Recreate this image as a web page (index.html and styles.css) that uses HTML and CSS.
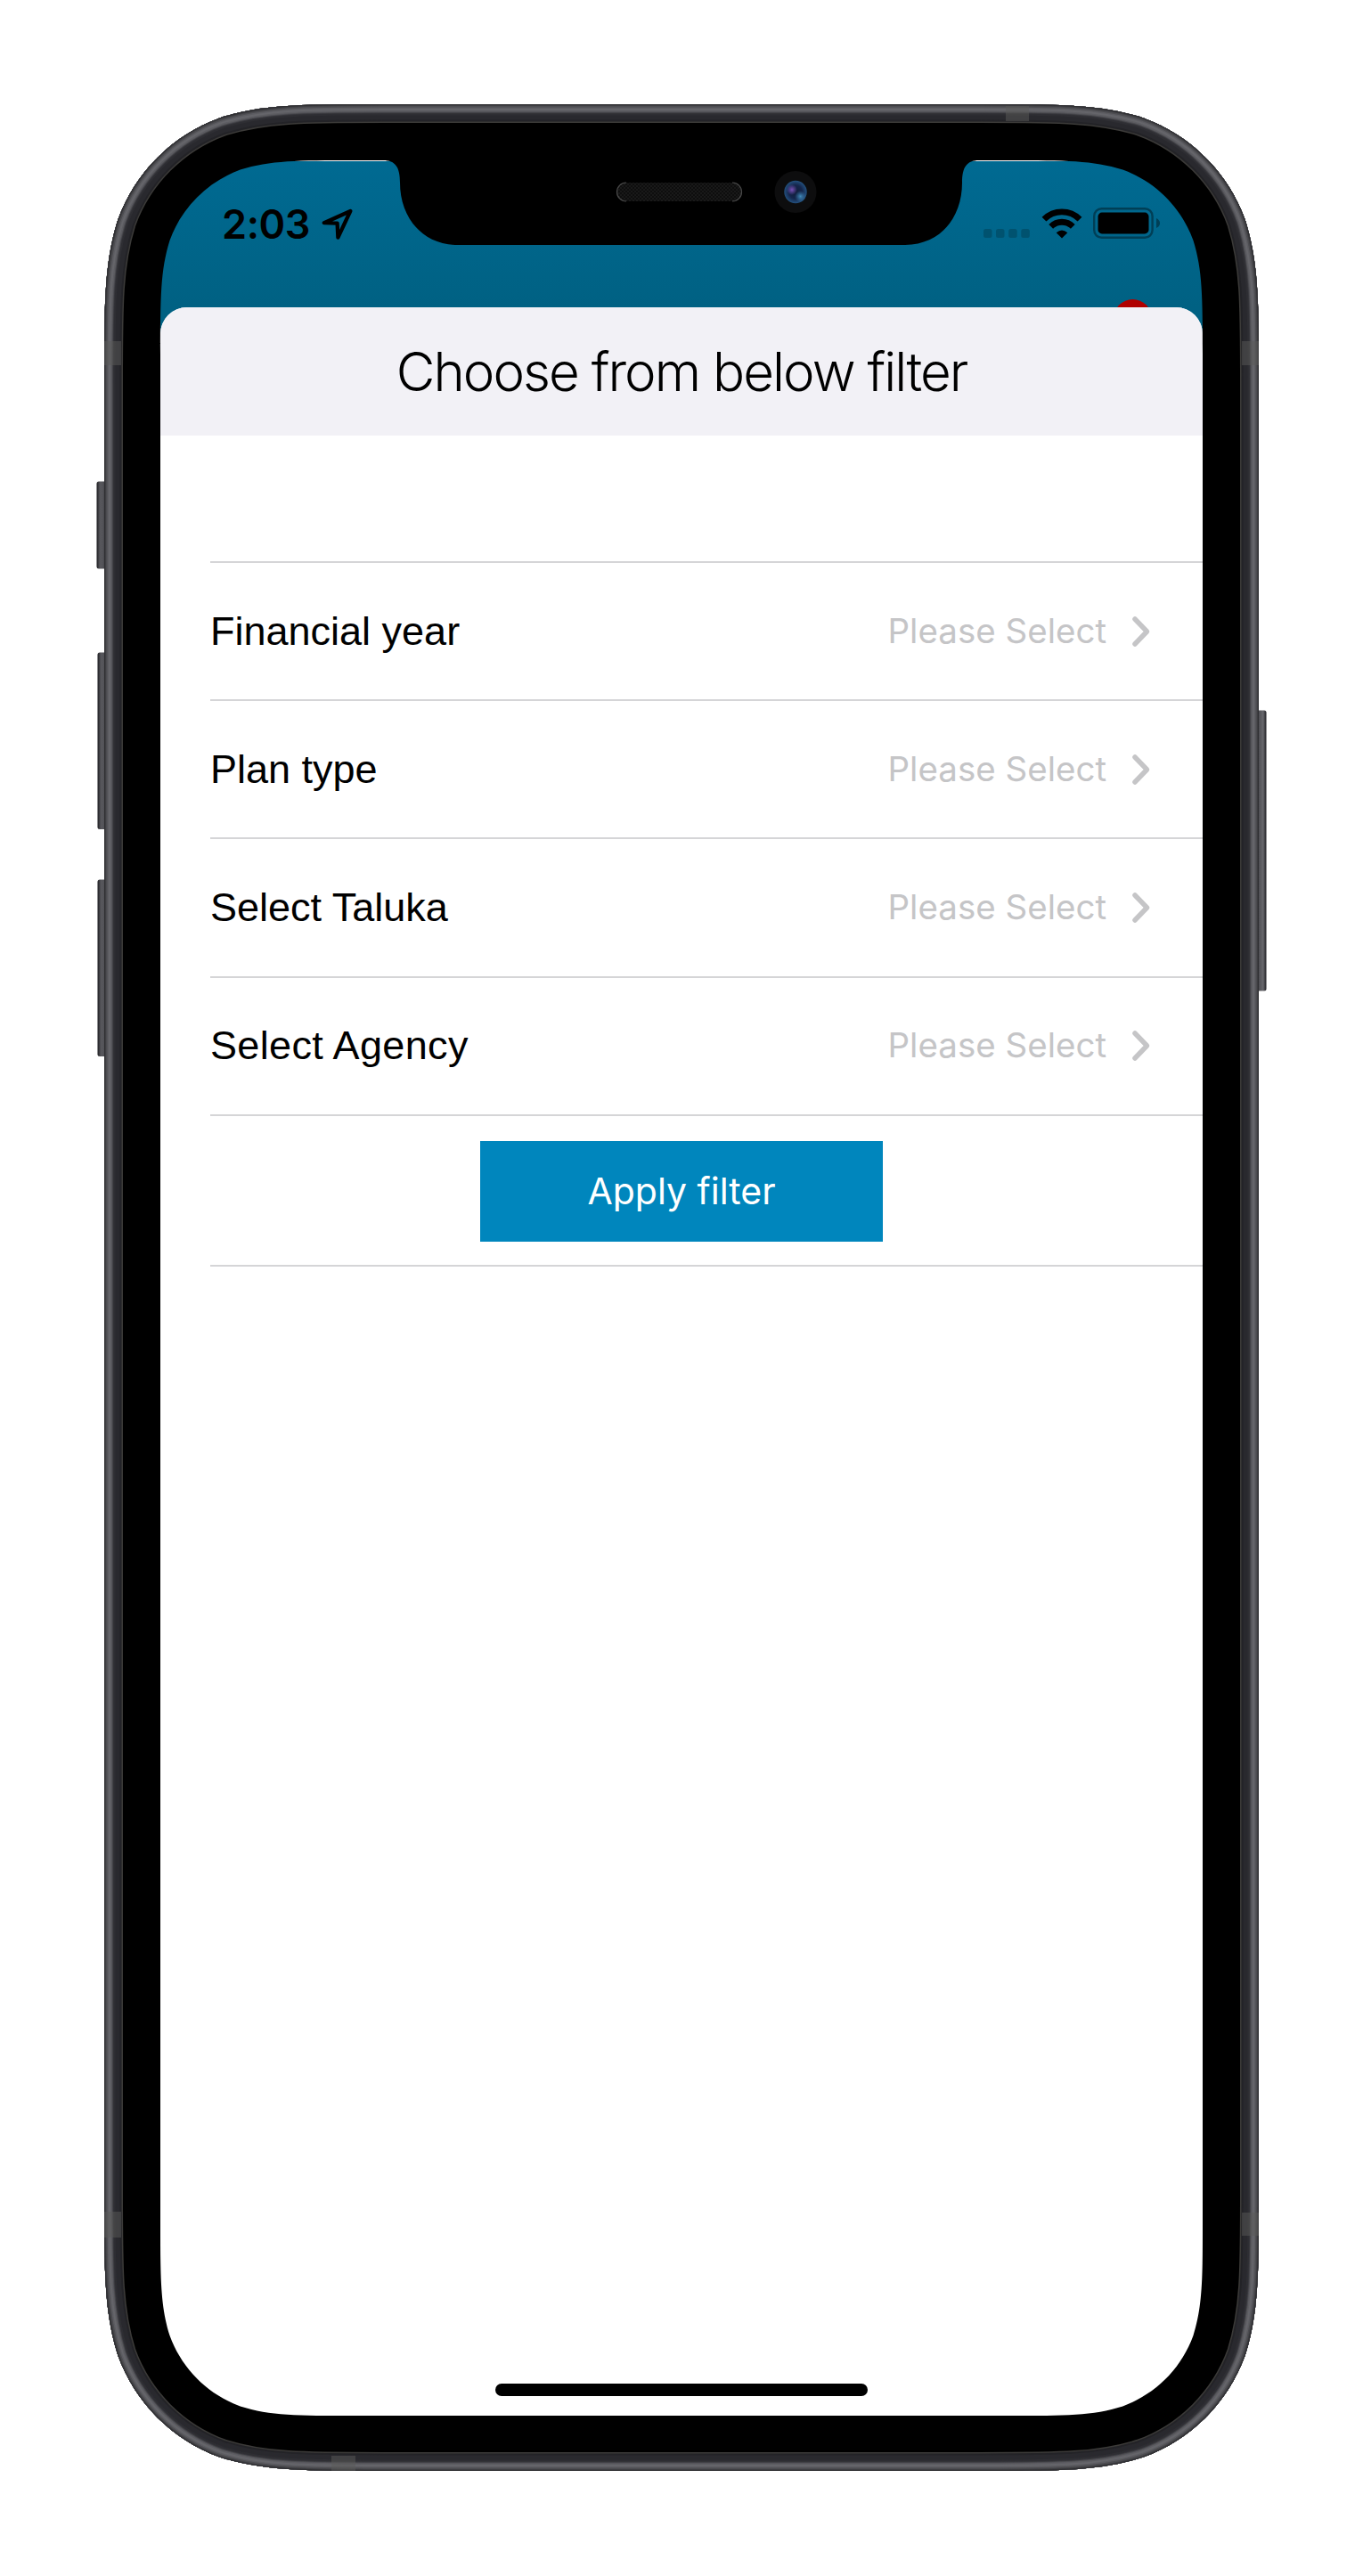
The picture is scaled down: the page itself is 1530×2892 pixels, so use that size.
FILE: index.html
```html
<!DOCTYPE html>
<html lang="en">
<head>
<meta charset="utf-8">
<title>Choose from below filter</title>
<link rel="stylesheet" href="styles.css">
</head>
<body>
<main class="phone">
  <div class="screen">
    <header class="status-bar">
      <div class="status-left">
        <span class="clock">2:03</span>
        <svg class="location" width="36" height="36" viewBox="0 0 36 36"><path d="M32.3 3 2.8 16.2 17.6 16.6 18.4 32.6Z"/></svg>
      </div>
      <div class="status-right">
        <svg class="signal" width="54" height="34" viewBox="0 0 54 34"><rect x="1" y="23" width="9.5" height="10" rx="2.5"/><rect x="15" y="23" width="9.5" height="10" rx="2.5"/><rect x="29.2" y="23" width="9.5" height="10" rx="2.5"/><rect x="43.3" y="23" width="9.5" height="10" rx="2.5"/></svg>
        <svg class="wifi" width="46" height="34" viewBox="0 0 46 34">
          <path class="arc" d="M3 12.2A28.3 28.3 0 0 1 43 12.2"/>
          <path class="arc" d="M10.7 20.3A17.5 17.5 0 0 1 35.3 20.3"/>
          <path d="M23 33.5 16.7 27.2Q23 21.8 29.3 27.2Z"/>
        </svg>
        <svg class="battery" width="76" height="36" viewBox="0 0 76 36">
          <rect class="shell" x="1.2" y="1.2" width="65.4" height="32.6" rx="8.5"/>
          <rect x="5.5" y="5.6" width="57" height="23.8" rx="4.5"/>
          <path class="nub" d="M71 12Q75 14 75 17.5T71 23Z"/>
        </svg>
      </div>
      <span class="badge"></span>
    </header>
    <section class="sheet">
      <h1 class="title">Choose from below filter</h1>
      <ul class="filters">
        <li class="row"><span class="label">Financial year</span><span class="value">Please Select</span><svg class="chevron" width="22" height="36" viewBox="0 0 22 36"><path d="M4 4 17.5 18 4 32"/></svg></li>
        <li class="row"><span class="label">Plan type</span><span class="value">Please Select</span><svg class="chevron" width="22" height="36" viewBox="0 0 22 36"><path d="M4 4 17.5 18 4 32"/></svg></li>
        <li class="row"><span class="label">Select Taluka</span><span class="value">Please Select</span><svg class="chevron" width="22" height="36" viewBox="0 0 22 36"><path d="M4 4 17.5 18 4 32"/></svg></li>
        <li class="row"><span class="label label-agency">Select Agency</span><span class="value">Please Select</span><svg class="chevron" width="22" height="36" viewBox="0 0 22 36"><path d="M4 4 17.5 18 4 32"/></svg></li>
        <li class="action"><button class="apply" type="button">Apply filter</button></li>
      </ul>
      <div class="home-indicator"></div>
    </section>
  </div>
  <svg class="frame" width="1314" height="2657" viewBox="108 117 1314 2657">
    <defs>
      <path id="body" d="M430.4 117H1099.6C1189.9 117 1235 117 1283.5 132.4C1336.6 151.7 1378.3 193.4 1397.6 246.5C1413 295 1413 340.1 1413 430.4V2460.6C1413 2550.9 1413 2596 1397.6 2644.5C1378.3 2697.6 1336.6 2739.3 1283.5 2758.6C1235 2774 1189.9 2774 1099.6 2774H430.4C340.1 2774 295 2774 246.5 2758.6C193.4 2739.3 151.7 2697.6 132.4 2644.5C117 2596 117 2550.9 117 2460.6V430.4C117 340.1 117 295 132.4 246.5C151.7 193.4 193.4 151.7 246.5 132.4C295 117 340.1 117 430.4 117Z"/>
      <path id="opening" d="M397 180H430C444 180 449 188 449 205C449 244 474 275 514 275H1015C1056 275 1080 244 1080 205C1080 188 1085 180 1099 180H1133C1195.4 180 1226.7 180 1260.3 190.6C1297.1 204 1326 232.9 1339.4 269.7C1350 303.3 1350 334.6 1350 397V2495C1350 2557.4 1350 2588.7 1339.4 2622.3C1326 2659.1 1297.1 2688 1260.3 2701.4C1226.7 2712 1195.4 2712 1133 2712H397C334.6 2712 303.3 2712 269.7 2701.4C232.9 2688 204 2659.1 190.6 2622.3C180 2588.7 180 2557.4 180 2495V397C180 334.6 180 303.3 190.6 269.7C204 232.9 232.9 204 269.7 190.6C303.3 180 334.6 180 397 180Z"/>
      <clipPath id="bodyClip"><use href="#body"/></clipPath>
      <mask id="cut" maskUnits="userSpaceOnUse" x="108" y="117" width="1314" height="2657"><rect x="108" y="117" width="1314" height="2657" fill="#fff"/><use href="#opening" fill="#000"/></mask>
      <linearGradient id="key"><stop offset="0" stop-color="#1c1c20"/><stop offset=".3" stop-color="#56565b"/><stop offset=".55" stop-color="#55555a"/><stop offset="1" stop-color="#323237"/></linearGradient>
      <linearGradient id="keyRight" x1="1" x2="0"><stop offset="0" stop-color="#1c1c20"/><stop offset=".3" stop-color="#68686d"/><stop offset=".6" stop-color="#55555a"/><stop offset="1" stop-color="#3a3a3f"/></linearGradient>
      <pattern id="mesh" width="4" height="4" patternUnits="userSpaceOnUse"><rect width="4" height="4" fill="#191919"/><path d="M0 0h2v2H0zM2 2h2v2H2z" fill="#0e0e0e"/></pattern>
      <radialGradient id="lens"><stop offset="0" stop-color="#101c38"/><stop offset=".6" stop-color="#15264c"/><stop offset="1" stop-color="#23507e"/></radialGradient>
      <radialGradient id="violet"><stop offset="0" stop-color="#7650b4"/><stop offset="1" stop-color="#7650b4" stop-opacity="0"/></radialGradient>
      <radialGradient id="cyan"><stop offset="0" stop-color="#4189b5"/><stop offset="1" stop-color="#3575a8" stop-opacity="0"/></radialGradient>
    </defs>
    <g class="keys">
      <rect x="108.5" y="529.5" width="12" height="109" rx="2.5" fill="none"/>
      <rect x="108.5" y="540.5" width="12" height="98" rx="2.5" fill="url(#key)"/>
      <rect x="109.5" y="732.5" width="12" height="198.5" rx="2.5" fill="url(#key)"/>
      <rect x="109.5" y="987.5" width="12" height="198.5" rx="2.5" fill="url(#key)"/>
      <rect x="1409.5" y="797.5" width="12" height="315" rx="2.5" fill="url(#keyRight)"/>
    </g>
    <g mask="url(#cut)">
      <use href="#body" fill="#000"/>
      <g clip-path="url(#bodyClip)" fill="none">
        <use href="#body" stroke="#3b3a38" stroke-width="42"/>
        <use href="#body" stroke="#232327" stroke-width="39"/>
        <use href="#body" stroke="#29292e" stroke-width="35"/>
        <use href="#body" stroke="#2e2e33" stroke-width="25"/>
        <use href="#body" stroke="#38383d" stroke-width="21"/>
        <use href="#body" stroke="#4d4d52" stroke-width="19"/>
        <use href="#body" stroke="#5c5c61" stroke-width="17"/>
        <use href="#body" stroke="#65656a" stroke-width="14"/>
        <use href="#body" stroke="#5c5c61" stroke-width="10"/>
        <use href="#body" stroke="#4c4c50" stroke-width="7"/>
        <use href="#body" stroke="#3e3e42" stroke-width="4"/>
        <use href="#body" stroke="#2f2f32" stroke-width="2"/>
      </g>
      <path class="bands" d="M117 383h19v27h-19zM1394 383h19v27h-19zM117 2483h19v29h-19zM1394 2484h19v26h-19zM1129 119h26v17h-26zM372 2757h27v17h-27z"/>
      <rect x="692" y="205" width="141" height="21" rx="10.5" fill="url(#mesh)"/>
      <path d="M703 205A10.5 10.5 0 0 0 703 226M822 205A10.5 10.5 0 0 1 822 226" fill="none" stroke="#4a4a4a" stroke-width="1.2"/>
      <circle cx="893" cy="215.5" r="23.5" fill="#0d0d0e"/>
      <circle cx="893" cy="215.5" r="12.7" fill="url(#lens)"/>
      <circle cx="889" cy="213" r="6" fill="url(#violet)"/>
      <circle cx="898.5" cy="220.5" r="6.5" fill="url(#cyan)"/>
    </g>
  </svg>
</main>
</body>
</html>
```
FILE: styles.css
```css
* { box-sizing: border-box; }

body {
  margin: 0;
  background: #fff;
  font-family: Inter, "Liberation Sans", sans-serif;
  color: #000;
}

svg { display: block; flex: none; }

.phone {
  position: relative;
  width: 1296px;
  height: 2657px;
  margin: 117px;
  padding: 63px 63px 62px;
}

/* The bezel lies over the screen and masks its corners and notch. */
.frame {
  position: absolute;
  top: 0;
  left: -9px;
  pointer-events: none;
}

.bands { fill: #5a5a58; fill-opacity: .5; }

.screen {
  display: flex;
  flex-direction: column;
  height: 2532px;
  overflow: hidden;
  background: linear-gradient(#fff 1px, #006a92 1px, #006183 165px, #006183 200px, #fff 200px);
}

.status-bar {
  position: relative;
  display: flex;
  justify-content: space-between;
  flex: none;
  height: 165px;
  padding: 53px 47px 0 69px;
}

.status-left, .status-right { display: flex; }

.clock {
  width: 112px;
  font-size: 45px;
  font-weight: 570;
  line-height: 37px;
  letter-spacing: -.4px;
}

.location { margin-top: 1px; }

.location path {
  fill: none;
  stroke: #000;
  stroke-width: 4.3;
  stroke-linejoin: round;
}

.signal { fill: #00526f; margin: 1px 12px 0 0; }
.wifi { margin: 1px 12px 0 0; }
.wifi .arc { fill: none; stroke: #000; stroke-width: 6.8; }
.battery .shell { fill: none; stroke: #003f56; stroke-width: 2.4; }
.battery .nub { fill: #003f56; }

.badge {
  position: absolute;
  right: 57.5px;
  top: 156px;
  width: 43px;
  height: 43px;
  border-radius: 50%;
  background: #b00000;
}

.sheet {
  position: relative;
  display: flex;
  flex-direction: column;
  flex: 1;
  overflow: hidden;
  border-radius: 30px 30px 0 0;
  background: #fff;
}

.title {
  flex: none;
  height: 144px;
  margin: 0;
  background: #f2f1f6;
  font-size: 60px;
  font-weight: 300;
  line-height: 145px;
  letter-spacing: -1.95px;
  text-align: center;
  white-space: nowrap;
}

.filters {
  margin: 141px 0 0 56px;
  padding: 0;
  border-top: 2px solid #d5d5d7;
  list-style: none;
}

.row {
  display: flex;
  align-items: center;
  height: 155.2px;
  padding-right: 58px;
  border-bottom: 2px solid #d5d5d7;
}

.label {
  flex: 1;
  font: 45px/60px "Liberation Sans", Arial, sans-serif;
}

.label-agency { letter-spacing: .35px; }

.value {
  margin: -2px 28px 0 0;
  color: #c5c5c7;
  font-size: 38.5px;
}

.chevron path {
  fill: none;
  stroke: #c5c5c7;
  stroke-width: 5.5;
  stroke-linecap: round;
  stroke-linejoin: round;
}

.action {
  height: 169px;
  padding: 28px 0 0 303px;
  border-bottom: 2px solid #d5d5d7;
}

.apply {
  display: block;
  width: 452px;
  height: 113px;
  padding: 0;
  border: 0;
  background: #0086bd;
  color: #fff;
  font: 41px Inter, "Liberation Sans", sans-serif;
}

.home-indicator {
  width: 418px;
  height: 14px;
  margin: auto auto 22px;
  border-radius: 7px;
  background: #000;
}
```
